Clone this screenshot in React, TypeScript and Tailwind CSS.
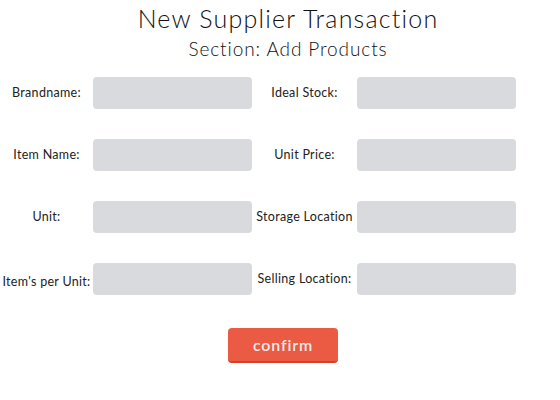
export default function App() {
    const left = ["Brandname:", "Item Name:", "Unit:", "Item's per Unit:"];
    const right = ["Ideal Stock:", "Unit Price:", "Storage Location", "Selling Location:"];

    return (
        <div className="w-[560px] h-[400px] bg-white text-[#111]" style={{ fontFamily: "Lato, 'Open Sans', sans-serif" }}>
            <div className="pl-4 pt-[3px] text-center">
                <h1 className="text-[25px] leading-[30px] font-light tracking-[1.2px]">New Supplier Transaction</h1>
                <h2 className="mt-[5px] text-[19px] leading-[22px] font-light tracking-[0.9px]">Section: Add Products</h2>
            </div>

            <div className="mt-[17px] grid grid-cols-[93px_159px_105px_159px] gap-y-[30px] text-[#222]">
                {left.map((label, i) => (
                    <div key={label} className="contents">
                        <div className={`flex items-center justify-center whitespace-nowrap text-[12.5px] tracking-[0.3px] ${i === 3 ? "pt-[7px]" : ""}`}>{label}</div>
                        <div className="h-[32px] rounded-[4px] bg-[#d9dadd]" />
                        <div className="flex items-center justify-center whitespace-nowrap text-[12.5px] tracking-[0.3px]">{right[i]}</div>
                        <div className="h-[32px] rounded-[4px] bg-[#d9dadd]" />
                    </div>
                ))}
            </div>

            <div className="mt-[33px] flex justify-center pl-[6px]">
                <button className="h-[35px] w-[110px] rounded-[4px] border-b-2 border-[#d63f28] bg-[#eb5a42] text-[16px] font-semibold tracking-[0.8px] text-[#ececec]">
                    confirm
                </button>
            </div>
        </div>
    );
}
